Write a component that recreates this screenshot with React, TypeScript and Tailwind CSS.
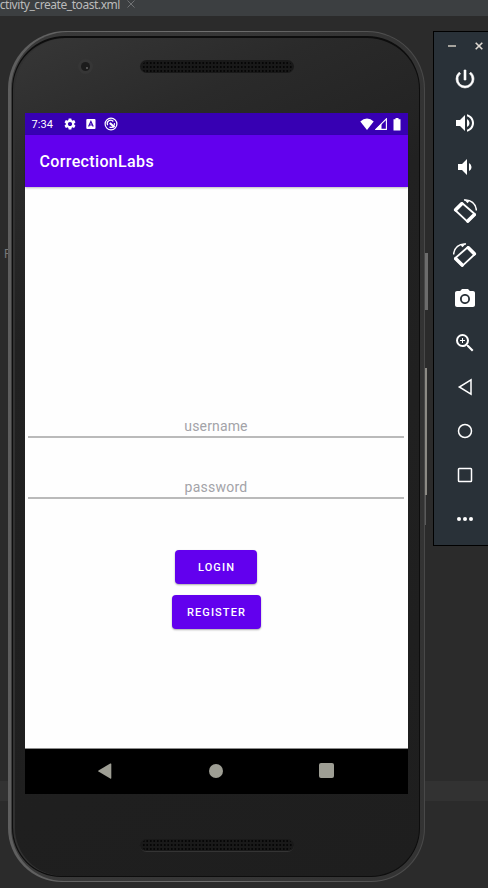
import type { ReactNode } from 'react';
import {
  MdCameraAlt,
  MdPowerSettingsNew,
  MdSettings,
  MdVolumeDown,
  MdVolumeUp,
  MdZoomIn,
} from 'react-icons/md';

function RotateIcon({ className = '' }: { className?: string }) {
  return (
    <svg viewBox="0 0 24 24" className={`size-6 ${className}`} fill="none" stroke="#fff">
      <path d="M9 4 2 11 14.7 22.9 22 15.3Z" strokeWidth="1.8" strokeLinejoin="round" />
      <path d="M8.7 4.8 2.7 10.8M21.2 15.8 14.8 22" strokeWidth="3.6" strokeLinecap="round" />
      <path d="M11 1.1C17.5.2 23 4.600 23.400 11.500" strokeWidth="1.5" />
      <path d="M11 .6 14.600 4.200 16.200 2.200Z" fill="#fff" stroke="none" />
    </svg>
  );
}

const tools: { name: string; icon: ReactNode }[] = [
  { name: 'power', icon: <MdPowerSettingsNew className="size-6 [&>path:not([fill=none])]:[stroke-width:0.6]" /> },
  { name: 'volume up', icon: <MdVolumeUp className="size-6" /> },
  { name: 'volume down', icon: <MdVolumeDown className="size-6" /> },
  { name: 'rotate left', icon: <RotateIcon /> },
  { name: 'rotate right', icon: <RotateIcon className="-scale-x-100" /> },
  { name: 'screenshot', icon: <MdCameraAlt className="size-6" /> },
  { name: 'zoom', icon: <MdZoomIn className="size-6" /> },
  {
    name: 'back',
    icon: (
      <svg viewBox="0 0 24 24" className="size-6" fill="none" stroke="#fff" strokeWidth="1.5">
        <path d="M18 4.800V19.200L6.300 12Z" />
      </svg>
    ),
  },
  {
    name: 'home',
    icon: (
      <svg viewBox="0 0 24 24" className="size-6" fill="none" stroke="#fff" strokeWidth="1.5">
        <circle cx="12" cy="12" r="6.500" />
      </svg>
    ),
  },
  {
    name: 'overview',
    icon: (
      <svg viewBox="0 0 24 24" className="size-6" fill="none" stroke="#fff" strokeWidth="1.5">
        <rect x="5.500" y="5.500" width="13" height="13" rx="0.800" />
      </svg>
    ),
  },
  {
    name: 'more',
    icon: (
      <svg viewBox="0 0 24 24" className="size-6" fill="#fff">
        <circle cx="6" cy="12" r="2" />
        <circle cx="12" cy="12" r="2" />
        <circle cx="18" cy="12" r="2" />
      </svg>
    ),
  },
];

function Speaker({ className = '' }: { className?: string }) {
  return (
    <div className={`flex h-[13px] w-[154px] items-center rounded-full bg-[#191919] px-[2px] ${className}`}>
      <div className="h-[12px] w-full rounded-full bg-[radial-gradient(circle_at_center,#060606_0.9px,transparent_1.4px)] bg-[length:3.5px_4px]" />
    </div>
  );
}

function StatusBar() {
  return (
    <div className="flex h-[22px] shrink-0 items-center bg-[#3700b3] pr-[7px] pl-[7px] text-white">
      <span className="text-[11px] leading-none tracking-[0.1px]">7:34</span>
      <MdSettings className="ml-[9.500px] size-[14px]" />
      <svg viewBox="0 0 10 10" className="ml-[9px] size-[10px]">
        <rect x="0.300" y="0" width="9.200" height="10" rx="1" fill="#fff" />
        <path d="M2.600 7.500 4.900 2.500 7.200 7.500M3.500 6H6.300" stroke="#3700b3" strokeWidth="1.200" fill="none" />
      </svg>
      <svg viewBox="0 0 14 14" className="ml-[8px] size-[14px]" fill="none" stroke="#fff">
        <circle cx="7" cy="7" r="5.900" strokeWidth="1.200" />
        <path d="M3.700 8.300A3.400 3.400 0 0 1 9.300 4.500M10.400 6.200A3.500 3.500 0 0 1 5.500 10.100" strokeWidth="1.200" />
        <path d="M5.800 6 10.500 10.300" strokeWidth="2.200" />
      </svg>
      <div className="ml-auto flex items-center">
        <svg viewBox="0 0 14 12" className="h-3 w-[14px]" fill="#fff">
          <path d="M7 12 .3 3.500Q3.300.4 7 .4T13.700 3.500Z" />
        </svg>
        <svg viewBox="0 0 12 12" className="ml-px size-3">
          <path d="M.8 11.400H11.400V.8Z" fill="none" stroke="#fff" strokeWidth="1.100" />
          <path d="M.5 11.500H6.500V5.500Z" fill="#fff" />
        </svg>
        <svg viewBox="0 0 8 13" className="ml-[6px] h-[13px] w-2" fill="#fff">
          <path d="M2.500 0H5.500V1.200H7.500V12.600H.5V1.200H2.500Z" />
        </svg>
      </div>
    </div>
  );
}

function AppScreen() {
  return (
    <div className="flex h-[681px] w-[383px] flex-col bg-[#fefefe]">
      <StatusBar />
      <div className="flex h-[52px] shrink-0 items-center bg-[#6200ee] pt-[2px] pl-[15px] text-[16px] font-medium tracking-[0.36px] text-white shadow-[0_1px_2px_#00000044]">
        CorrectionLabs
      </div>
      <form className="flex flex-1 flex-col items-center px-[3px] pt-[226px]">
        <div className="flex h-[25px] w-[376px] items-center justify-center self-start border-b-2 border-[#bababa] pt-[3px] pl-px text-[14px] tracking-[0.15px] text-[#a3a3a8]">
          <span>username</span>
        </div>
        <div className="mt-[36px] flex h-[25px] w-[376px] items-center justify-center self-start border-b-2 border-[#bababa] pt-[3px] pl-px text-[14px] tracking-[0.25px] text-[#a3a3a8]">
          <span>password</span>
        </div>
        <button
          type="button"
          className="mt-[51px] h-[34px] w-[82px] rounded-[4px] bg-[#6200ee] pt-[2px] pl-px text-[11px] font-medium tracking-[1.1px] text-white shadow-[0_1px_2px_#00000055]"
        >
          LOGIN
        </button>
        <button
          type="button"
          className="mt-[11px] h-[34px] w-[89px] rounded-[4px] bg-[#6200ee] pt-[2px] pl-px text-[11px] font-medium tracking-[1.1px] text-white shadow-[0_1px_2px_#00000055]"
        >
          REGISTER
        </button>
      </form>
      <div className="flex h-[46px] shrink-0 items-center justify-between border-t border-[#8c8c8c] bg-black pr-[74px] pb-[2px] pl-[72px]">
        <svg viewBox="0 0 16 16" className="size-4" fill="#9e9e94">
          <path d="M14.300 1V15Q14.300 16 13.200 15.400L1.500 8.600Q.8 8 1.500 7.400L13.200.6Q14.300 0 14.300 1Z" />
        </svg>
        <div className="size-[14px] rounded-full bg-[#9e9e94]" />
        <div className="size-[15px] rounded-[2px] bg-[#9e9e94]" />
      </div>
    </div>
  );
}

function Phone() {
  return (
    <div className="relative mt-[15px] ml-2 h-[851px] w-[417px] shrink-0">
      <div className="absolute top-[222px] -right-[3px] h-[57px] w-[3px] bg-[#6c6c6c]" />
      <div className="absolute top-[337px] -right-[2px] h-[127px] w-[2px] bg-[#8c8a84]" />
      <div className="absolute top-[464px] -right-px h-[30px] w-px bg-[#5a5a5a]" />
      <div className="h-full rounded-t-[58px] rounded-b-[54px] bg-linear-to-r from-[#5e5e5e] via-[#707070] to-[#484848] pt-px pr-px pb-px pl-[3px]">
        <div className="h-full rounded-t-[57px] rounded-b-[53px] bg-linear-to-r from-[#3c3c3c] via-[#393939] via-5% to-[#333333] pt-[4px] pr-[4px] pb-[4px] pl-px">
          <div className="flex h-full flex-col items-center rounded-t-[53px] rounded-b-[49px] border border-t-2 border-[#0d0d0d] bg-[linear-gradient(155deg,#373737_0%,#2a2a2a_14%,#212121_30%,#1e1e1e_100%)] shadow-[inset_2px_0_0_#303030]">
            <div className="flex h-[75px] w-full items-start pt-[21px] pl-[65px]">
              <div className="flex size-[15px] items-center justify-center rounded-full bg-[#363636]">
                <div className="flex size-[9px] items-end justify-end rounded-full bg-[#1c1c1c] p-[2px]">
                  <div className="size-[2px] rounded-full bg-[#666]" />
                </div>
              </div>
              <Speaker className="mt-px ml-[47px]" />
            </div>
            <AppScreen />
            <Speaker className="mt-[45px] ml-px border-b border-[#343434]" />
          </div>
        </div>
      </div>
    </div>
  );
}

function EmulatorToolbar() {
  return (
    <aside className="mt-[15px] ml-2 flex h-[515px] w-[55px] shrink-0 flex-col border-y border-l border-black bg-[#293138] text-white">
      <div className="flex h-[26px] shrink-0 items-center pt-[2px] pl-[14px]">
        <span className="h-[2px] w-2 bg-[#a5a39d]" />
        <svg viewBox="0 0 8 8" className="ml-[19px] size-2" stroke="#ded9d2" strokeWidth="1.600">
          <path d="M.7.700 7.300 7.300M7.300.7.700 7.300" />
        </svg>
      </div>
      <div className="flex flex-col gap-5 pt-[9px] pl-[19px]">
        {tools.map((tool) => (
          <span key={tool.name} aria-label={tool.name} className="size-6">
            {tool.icon}
          </span>
        ))}
      </div>
    </aside>
  );
}

export default function App() {
  return (
    <div className="relative h-[888px] w-[488px] overflow-hidden bg-[#2b2b2b] font-[Roboto,sans-serif]">
      <div className="flex h-4 items-center bg-[#3c3f41] font-['Noto_Sans',sans-serif] text-[12px] text-[#bbbbbb]">
        <div className="flex w-[120px] shrink-0 justify-end pb-[7px] leading-[14px] tracking-[-0.44px] whitespace-nowrap">
          ctivity_create_toast.xml
        </div>
        <svg viewBox="0 0 8 8" className="mb-[9px] ml-[7px] size-2" stroke="#707274" strokeWidth="1">
          <path d="M.5.500 7.500 7.500M7.500.5.500 7.500" />
        </svg>
      </div>
      <div className="absolute top-[781px] left-0 h-5 w-full bg-[#323232]" />
      <span className="absolute top-[248px] left-[4px] text-[12px] leading-none text-[#777]">P</span>
      <main className="relative flex items-start">
        <Phone />
        <EmulatorToolbar />
      </main>
    </div>
  );
}
